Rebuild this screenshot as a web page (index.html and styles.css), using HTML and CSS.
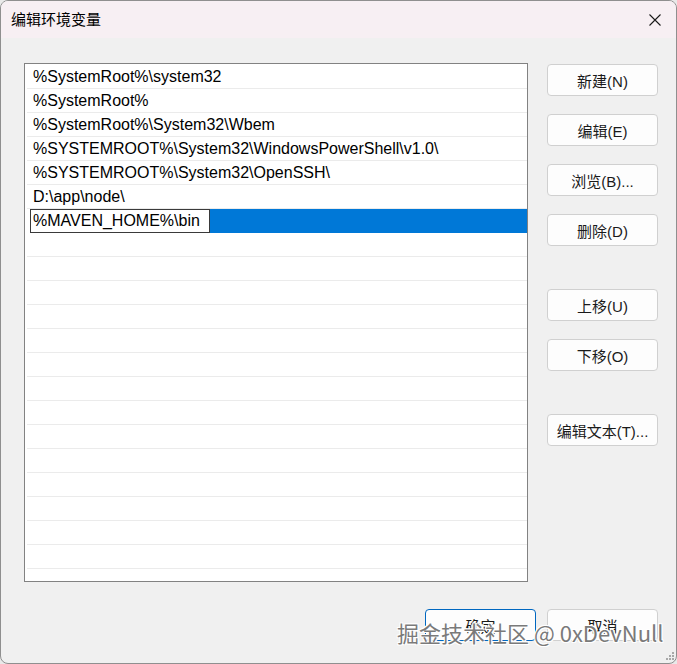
FILE: index.html
```html
<!DOCTYPE html>
<html lang="zh-CN">
<head>
<meta charset="utf-8">
<title>编辑环境变量</title>
<link rel="stylesheet" href="styles.css">
</head>
<body>
<div class="window">
  <div class="titlebar">
    <span class="title">编辑环境变量</span>
    <svg class="close" width="12" height="12" viewBox="0 0 12 12"><path d="M0.5 0.5 L11.5 11.5 M11.5 0.5 L0.5 11.5" stroke="#1a1a1a" stroke-width="1.1" fill="none"/></svg>
  </div>
  <div class="content">
    <div class="main">
      <div class="listbox">
        <div class="row">%SystemRoot%\system32</div>
        <div class="row">%SystemRoot%</div>
        <div class="row">%SystemRoot%\System32\Wbem</div>
        <div class="row">%SYSTEMROOT%\System32\WindowsPowerShell\v1.0\</div>
        <div class="row">%SYSTEMROOT%\System32\OpenSSH\</div>
        <div class="row">D:\app\node\</div>
        <div class="row row-sel"><div class="sel"><div class="edit">%MAVEN_HOME%\bin</div></div></div>
        <div class="row"></div><div class="row"></div><div class="row"></div><div class="row"></div>
        <div class="row"></div><div class="row"></div><div class="row"></div><div class="row"></div>
        <div class="row"></div><div class="row"></div><div class="row"></div><div class="row"></div>
        <div class="row"></div><div class="row"></div><div class="row"></div>
      </div>
      <div class="side">
        <button class="btn">新建(N)</button>
        <button class="btn">编辑(E)</button>
        <button class="btn">浏览(B)...</button>
        <button class="btn">删除(D)</button>
        <button class="btn btn-gap">上移(U)</button>
        <button class="btn">下移(O)</button>
        <button class="btn btn-gap">编辑文本(T)...</button>
      </div>
    </div>
    <div class="footer">
      <button class="btn btn-primary">确定</button>
      <button class="btn">取消</button>
    </div>
  </div>
  <div class="watermark">掘金技术社区 @ 0xDevNull</div>
  <svg class="grip" width="10" height="10" viewBox="0 0 10 10">
    <rect x="8" y="0" width="2" height="2" fill="#a8a8a8"/>
    <rect x="5" y="3" width="2" height="2" fill="#a8a8a8"/><rect x="8" y="3" width="2" height="2" fill="#a8a8a8"/>
    <rect x="2" y="6" width="2" height="2" fill="#a8a8a8"/><rect x="5" y="6" width="2" height="2" fill="#a8a8a8"/><rect x="8" y="6" width="2" height="2" fill="#a8a8a8"/>
  </svg>
</div>
</body>
</html>
```
FILE: styles.css
```css
* { box-sizing: border-box; }
html, body { margin: 0; padding: 0; background: #e9e9e9; }
.window {
  position: relative;
  width: 677px;
  height: 664px;
  background: #f0f0f0;
  border: 1px solid #8f8f8f;
  border-radius: 8px;
  overflow: hidden;
  font-family: "Liberation Sans", "Noto Sans CJK SC", sans-serif;
  color: #000;
}
.titlebar {
  height: 37px;
  background: #f7eff3;
  display: flex;
  align-items: center;
  justify-content: space-between;
  padding: 0 15px 0 10px;
}
.title {
  font-family: "Noto Sans CJK SC", sans-serif;
  font-size: 15px;
  line-height: 18px;
  margin-top: -1px;
}
.close { display: block; }
.content { padding: 25px 18px 0 23px; }
.main { display: flex; }
.listbox {
  width: 504px;
  height: 519px;
  background: #fff;
  border: 1px solid #828282;
  padding-top: 1px;
  overflow: hidden;
}
.row {
  height: 24px;
  border-bottom: 1px solid #ebebeb;
  margin-left: 2px;
  padding-left: 6px;
  font-size: 16px;
  line-height: 23px;
  white-space: nowrap;
}
.row-sel { padding-left: 0; border-bottom-color: transparent; }
.sel {
  margin-left: 3px;
  height: 24px;
  background: #0078d7;
}
.edit {
  width: 180px;
  height: 24px;
  background: #fff;
  border: 1px solid #3a3a3a;
  padding-left: 2px;
  line-height: 21px;
}
.side {
  display: flex;
  flex-direction: column;
  margin-left: 19px;
  padding-top: 1px;
}
.btn {
  width: 111px;
  height: 32px;
  background: #fdfdfd;
  border: 1px solid #d0d0d0;
  border-radius: 4px;
  font-family: "Liberation Sans", "Noto Sans CJK SC", sans-serif;
  font-size: 15px;
  color: #1a1a1a;
  padding: 0;
  margin-bottom: 18px;
}
.btn-gap { margin-top: 25px; }
.footer {
  display: flex;
  justify-content: flex-end;
  gap: 11px;
  margin-top: 27px;
}
.footer .btn { margin: 0; }
.btn-primary { border-color: #0067c0; }
.watermark {
  position: absolute;
  left: 396px;
  top: 616px;
  font-family: "Noto Sans CJK SC", sans-serif;
  font-size: 22px;
  line-height: 30px;
  color: #7a7a7a;
  text-shadow: 1px 1px 0 #fff, -1px -1px 0 #fff, 1px -1px 0 #fff, -1px 1px 0 #fff;
  white-space: nowrap;
}
.grip { position: absolute; right: 2px; bottom: 1px; }
```
